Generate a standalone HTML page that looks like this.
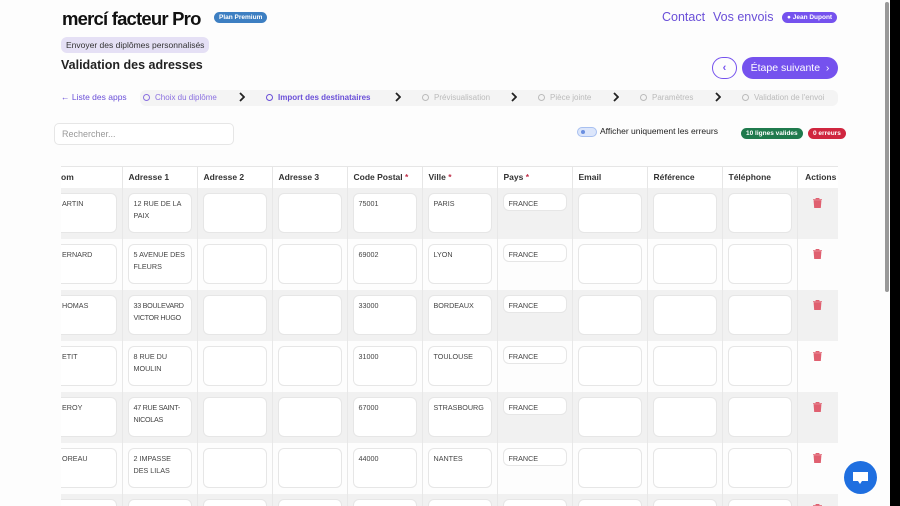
<!DOCTYPE html>
<html><head><meta charset="utf-8"><style>
*{box-sizing:border-box;margin:0;padding:0}
html{width:900px;height:506px;overflow:hidden}
body{width:900px;height:506px;overflow:hidden;background:#fdfdfd;font-family:"Liberation Sans",sans-serif;position:relative;color:#333}
.a{position:absolute}
.logo{left:62px;top:8px;font-size:18.5px;font-weight:bold;letter-spacing:-0.8px;color:#111}
.pill{border-radius:8px;color:#fff;font-size:6.5px;font-weight:bold;padding:2px 5px}
.step{font-size:8px;color:#bbb;top:93px}
.step i{display:inline-block;width:7px;height:7px;border:1px solid #bbb;border-radius:50%;margin-right:5px;vertical-align:-1px}
.chev{top:92px;width:6px;height:10px}
.wrap{position:absolute;left:61px;top:166px;width:777px;height:340px;overflow:hidden}
table{border-collapse:collapse;width:777px;table-layout:fixed;font-size:8px}
th{height:21px;text-align:left;padding-left:6px;font-size:8.5px;color:#333;border-right:1px solid #e6e6e6;border-top:1px solid #e6e6e6;background:#fff}
td{height:51px;border-right:1px solid #e8e8e8;vertical-align:top;padding:5px 5px;position:relative;overflow:hidden}
tr.g td{background:#f1f1f1}
td div{background:#fff;border:1px solid #e6e6e6;border-radius:6px;height:40px;padding:4px 5px;font-size:7.2px;line-height:12px;color:#444;overflow:hidden}
td div.s{height:18px}
th:last-child,td:last-child{border-right:none;text-align:center}
.r{color:#c0304a}
td svg{margin-top:5px}
</style></head><body>
<div class="a logo">mercí facteur Pro</div>
<div class="a pill" style="left:214px;top:12px;background:#3d7fc2">Plan Premium</div>
<div class="a" style="left:662px;top:10px;font-size:12.5px;color:#6a4fd8">Contact</div>
<div class="a" style="left:713px;top:10px;font-size:12.5px;color:#6a4fd8">Vos envois</div>
<div class="a pill" style="left:782px;top:12px;background:#7552ee">● Jean Dupont</div>
<div class="a" style="left:61px;top:37px;background:#e5e0f5;border-radius:6px;font-size:8.5px;padding:3px 5px;color:#333">Envoyer des diplômes personnalisés</div>
<div class="a" style="left:61px;top:58px;font-size:12.5px;font-weight:bold;color:#222">Validation des adresses</div>
<div class="a" style="left:712px;top:57px;width:25px;height:22px;border:1px solid #7552ee;border-radius:12px;color:#7552ee;text-align:center;font-size:11px;line-height:20px;font-weight:bold">‹</div>
<div class="a" style="left:742px;top:57px;width:96px;height:22px;background:#7552ee;border-radius:12px;color:#fff;font-size:10.5px;line-height:22px;text-align:center">Étape suivante &nbsp;›</div>
<div class="a" style="left:140px;top:90px;width:698px;height:16px;background:#f4f4f4;border-radius:6px"></div>
<div class="a step" style="left:61px;color:#6a4fd8;font-size:8.5px;top:92px">← Liste des apps</div>
<div class="a step" style="left:143px;color:#8a6fe0"><i style="border-color:#8a6fe0"></i>Choix du diplôme</div>
<svg class="a chev" style="left:239px" viewBox="0 0 6 10"><path d="M1 1l4 4-4 4" stroke="#222" stroke-width="1.8" fill="none"/></svg>
<div class="a step" style="left:266px;color:#6a4fd8;font-weight:bold"><i style="border-color:#6a4fd8"></i>Import des destinataires</div>
<svg class="a chev" style="left:395px" viewBox="0 0 6 10"><path d="M1 1l4 4-4 4" stroke="#222" stroke-width="1.8" fill="none"/></svg>
<div class="a step" style="left:422px"><i></i>Prévisualisation</div>
<svg class="a chev" style="left:511px" viewBox="0 0 6 10"><path d="M1 1l4 4-4 4" stroke="#222" stroke-width="1.8" fill="none"/></svg>
<div class="a step" style="left:538px"><i></i>Pièce jointe</div>
<svg class="a chev" style="left:613px" viewBox="0 0 6 10"><path d="M1 1l4 4-4 4" stroke="#222" stroke-width="1.8" fill="none"/></svg>
<div class="a step" style="left:640px"><i></i>Paramètres</div>
<svg class="a chev" style="left:715px" viewBox="0 0 6 10"><path d="M1 1l4 4-4 4" stroke="#222" stroke-width="1.8" fill="none"/></svg>
<div class="a step" style="left:742px"><i></i>Validation de l'envoi</div>
<div class="a" style="left:54px;top:123px;width:180px;height:22px;border:1px solid #e6e6e6;border-radius:5px;background:#fff;font-size:9px;color:#999;padding:5px 7px">Rechercher...</div>
<div class="a" style="left:577px;top:127px;width:20px;height:10px;border-radius:5px;background:#dce6fb;border:1px solid #a8c0f0"><span style="position:absolute;left:3px;top:2px;width:4px;height:4px;border-radius:50%;background:#6b8fe0"></span></div>
<div class="a" style="left:600px;top:126px;font-size:8.5px;color:#222">Afficher uniquement les erreurs</div>
<div class="a pill" style="left:741px;top:128px;background:#1f7a4d">10 lignes valides</div>
<div class="a pill" style="left:808px;top:128px;background:#d0263f">0 erreurs</div>
<div class="wrap"><table>
<colgroup><col style="width:61px"><col style="width:75px"><col style="width:75px"><col style="width:75px"><col style="width:75px"><col style="width:75px"><col style="width:75px"><col style="width:75px"><col style="width:75px"><col style="width:75px"><col style="width:41px"></colgroup>
<tr><th style="padding-left:0">om</th><th>Adresse 1</th><th>Adresse 2</th><th>Adresse 3</th><th>Code Postal <span class="r">*</span></th><th>Ville <span class="r">*</span></th><th>Pays <span class="r">*</span></th><th>Email</th><th>Référence</th><th>Téléphone</th><th>Actions</th></tr>
<tr class="g"><td style="padding-left:0"><div style="border-left:none;border-radius:0 6px 6px 0;padding-left:1px">ARTIN</div></td><td><div>12 RUE DE LA PAIX</div></td><td><div></div></td><td><div></div></td><td><div>75001</div></td><td><div>PARIS</div></td><td><div class="s">FRANCE</div></td><td><div></div></td><td><div></div></td><td><div></div></td><td><svg width="9" height="10" viewBox="0 0 9 10"><path d="M0 1.5h9M3 1.5V0h3v1.5M1 2.5h7l-.6 7.5H1.6z" fill="#e06070" stroke="#e06070" stroke-width=".8"/></svg></td></tr>
<tr><td style="padding-left:0"><div style="border-left:none;border-radius:0 6px 6px 0;padding-left:1px">ERNARD</div></td><td><div>5 AVENUE DES FLEURS</div></td><td><div></div></td><td><div></div></td><td><div>69002</div></td><td><div>LYON</div></td><td><div class="s">FRANCE</div></td><td><div></div></td><td><div></div></td><td><div></div></td><td><svg width="9" height="10" viewBox="0 0 9 10"><path d="M0 1.5h9M3 1.5V0h3v1.5M1 2.5h7l-.6 7.5H1.6z" fill="#e06070" stroke="#e06070" stroke-width=".8"/></svg></td></tr>
<tr class="g"><td style="padding-left:0"><div style="border-left:none;border-radius:0 6px 6px 0;padding-left:1px">HOMAS</div></td><td><div style="letter-spacing:-0.3px">33 BOULEVARD VICTOR HUGO</div></td><td><div></div></td><td><div></div></td><td><div>33000</div></td><td><div>BORDEAUX</div></td><td><div class="s">FRANCE</div></td><td><div></div></td><td><div></div></td><td><div></div></td><td><svg width="9" height="10" viewBox="0 0 9 10"><path d="M0 1.5h9M3 1.5V0h3v1.5M1 2.5h7l-.6 7.5H1.6z" fill="#e06070" stroke="#e06070" stroke-width=".8"/></svg></td></tr>
<tr><td style="padding-left:0"><div style="border-left:none;border-radius:0 6px 6px 0;padding-left:1px">ETIT</div></td><td><div>8 RUE DU MOULIN</div></td><td><div></div></td><td><div></div></td><td><div>31000</div></td><td><div>TOULOUSE</div></td><td><div class="s">FRANCE</div></td><td><div></div></td><td><div></div></td><td><div></div></td><td><svg width="9" height="10" viewBox="0 0 9 10"><path d="M0 1.5h9M3 1.5V0h3v1.5M1 2.5h7l-.6 7.5H1.6z" fill="#e06070" stroke="#e06070" stroke-width=".8"/></svg></td></tr>
<tr class="g"><td style="padding-left:0"><div style="border-left:none;border-radius:0 6px 6px 0;padding-left:1px">EROY</div></td><td><div style="letter-spacing:-0.3px">47 RUE SAINT-NICOLAS</div></td><td><div></div></td><td><div></div></td><td><div>67000</div></td><td><div>STRASBOURG</div></td><td><div class="s">FRANCE</div></td><td><div></div></td><td><div></div></td><td><div></div></td><td><svg width="9" height="10" viewBox="0 0 9 10"><path d="M0 1.5h9M3 1.5V0h3v1.5M1 2.5h7l-.6 7.5H1.6z" fill="#e06070" stroke="#e06070" stroke-width=".8"/></svg></td></tr>
<tr><td style="padding-left:0"><div style="border-left:none;border-radius:0 6px 6px 0;padding-left:1px">OREAU</div></td><td><div>2 IMPASSE DES LILAS</div></td><td><div></div></td><td><div></div></td><td><div>44000</div></td><td><div>NANTES</div></td><td><div class="s">FRANCE</div></td><td><div></div></td><td><div></div></td><td><div></div></td><td><svg width="9" height="10" viewBox="0 0 9 10"><path d="M0 1.5h9M3 1.5V0h3v1.5M1 2.5h7l-.6 7.5H1.6z" fill="#e06070" stroke="#e06070" stroke-width=".8"/></svg></td></tr>
<tr class="g"><td style="padding-left:0"><div style="border-left:none;border-radius:0 6px 6px 0;padding-left:1px">MON</div></td><td><div>19 GRANDE RUE</div></td><td><div></div></td><td><div></div></td><td><div>59000</div></td><td><div>LILLE</div></td><td><div class="s">FRANCE</div></td><td><div></div></td><td><div></div></td><td><div></div></td><td><svg width="9" height="10" viewBox="0 0 9 10"><path d="M0 1.5h9M3 1.5V0h3v1.5M1 2.5h7l-.6 7.5H1.6z" fill="#e06070" stroke="#e06070" stroke-width=".8"/></svg></td></tr>
</table></div>
<div class="a" style="left:844px;top:461px;width:33px;height:33px;border-radius:50%;background:#1f6fe0"><svg width="33" height="33" viewBox="0 0 33 33"><path d="M9 11h15v9h-6l-2 3-2-3H9z" fill="#fff"/></svg></div>
<div class="a" style="left:890px;top:0;width:10px;height:506px;background:#000"></div>
<div class="a" style="left:885px;top:2px;width:4px;height:290px;border-radius:2px;background:#999"></div>
</body></html>
